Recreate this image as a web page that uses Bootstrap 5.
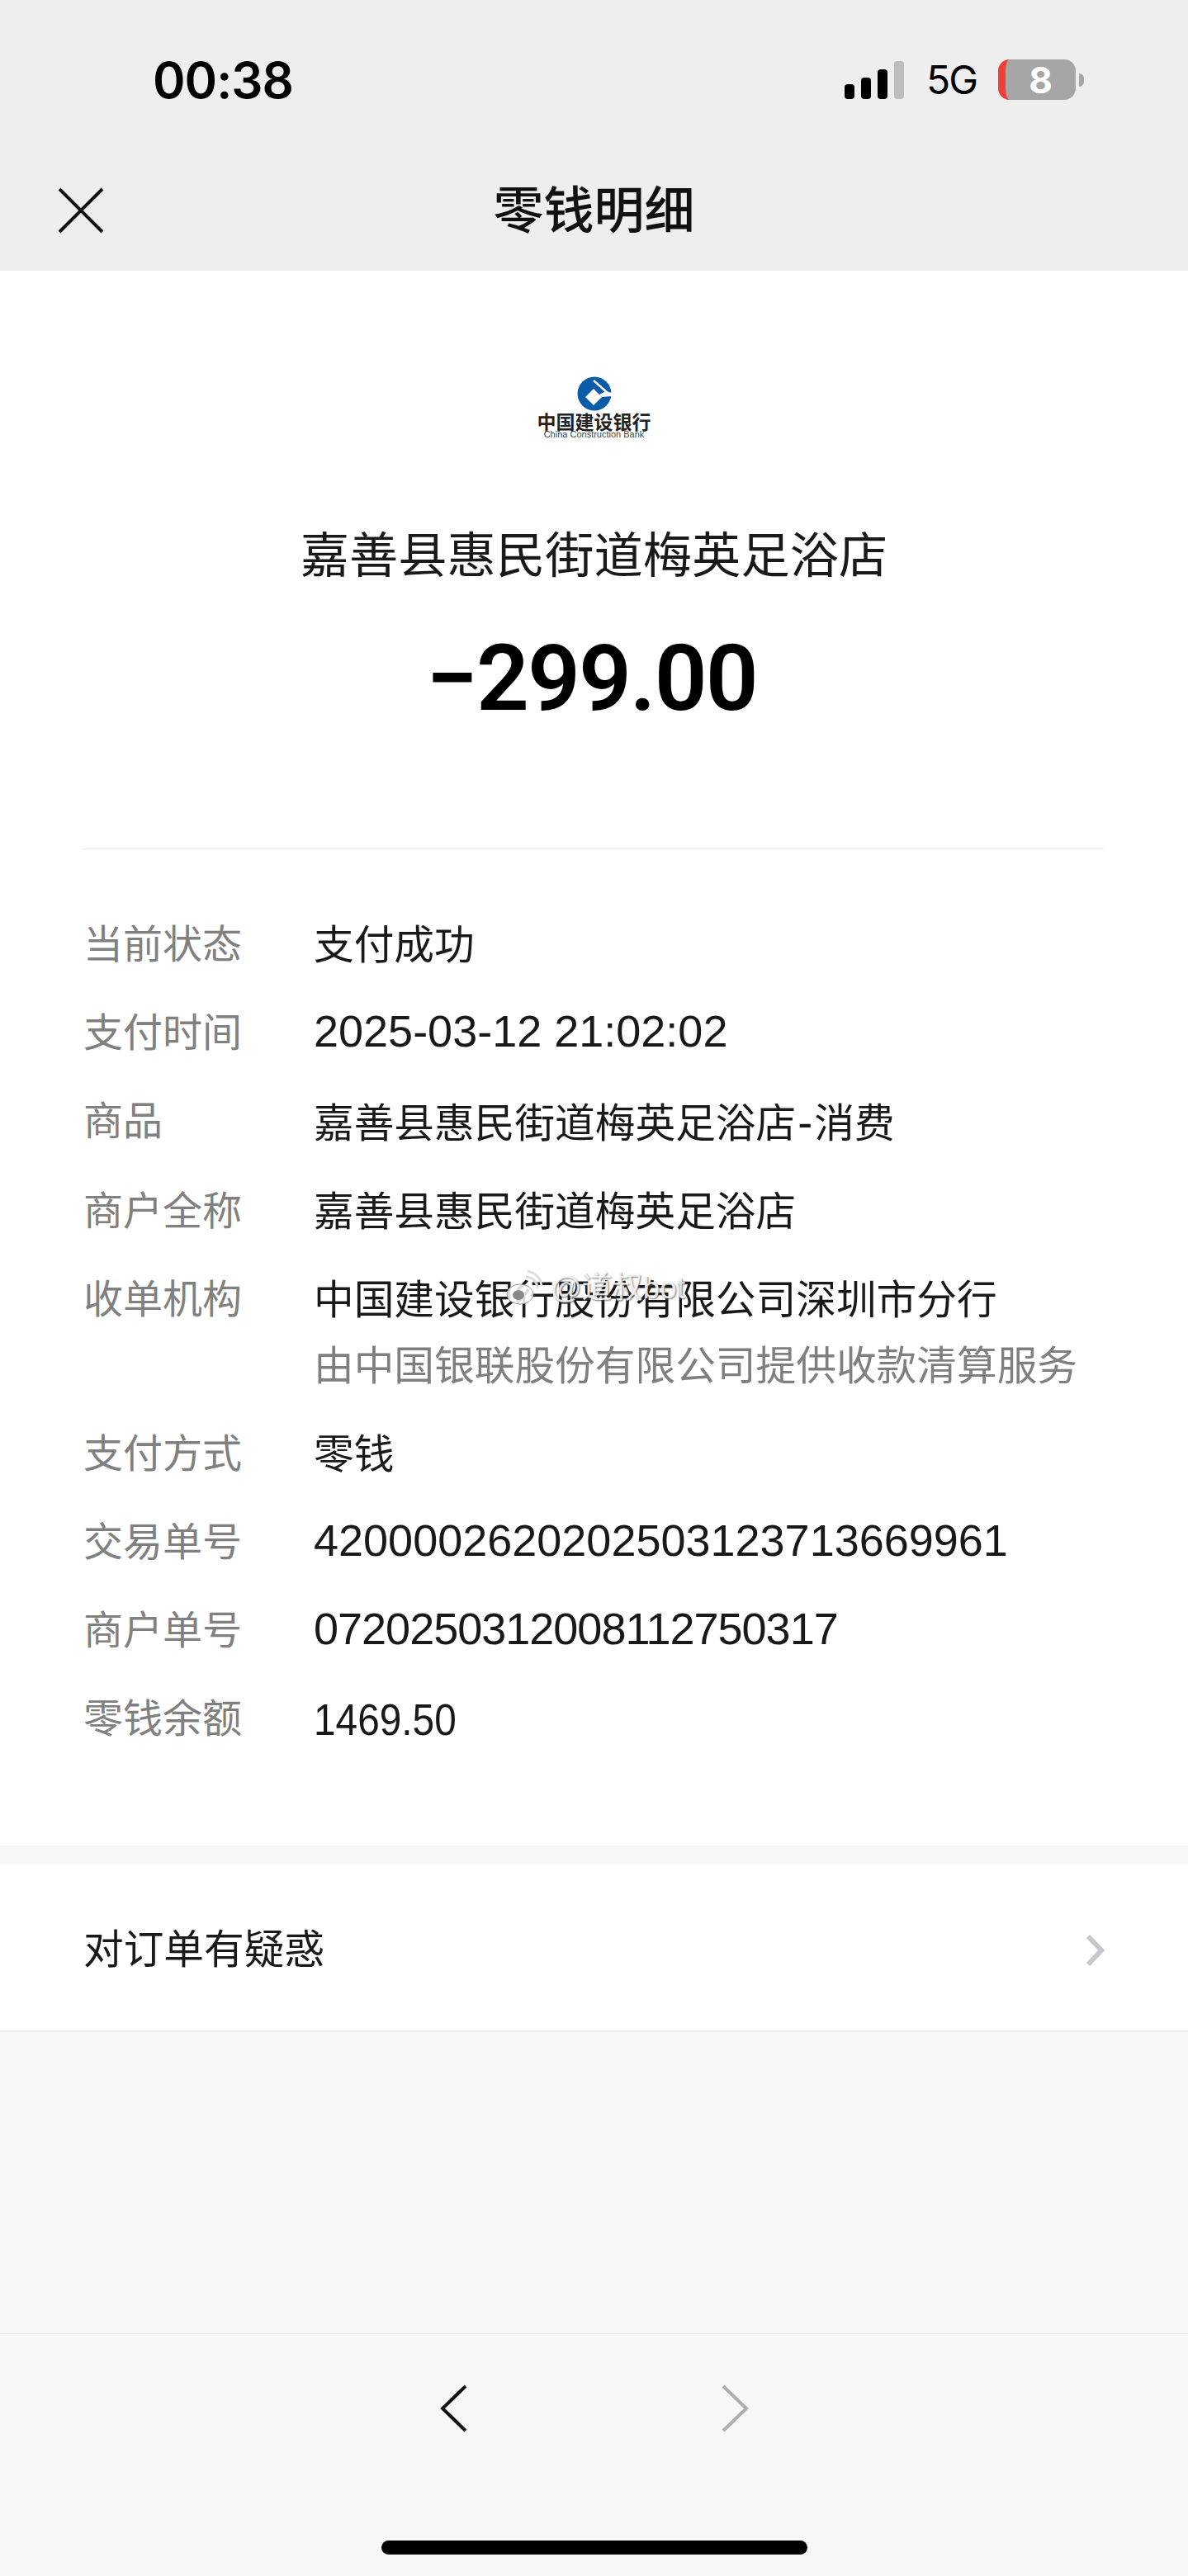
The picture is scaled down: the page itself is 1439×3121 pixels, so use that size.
<!DOCTYPE html>
<html lang="zh">
<head>
  <meta charset="UTF-8" />
  <meta name="viewport" content="width=device-width, initial-scale=1.0"/>
  <link href="https://cdn.jsdelivr.net/npm/bootstrap@5.3.1/dist/css/bootstrap.min.css" rel="stylesheet"/>
  <title>零钱明细</title>
  <style>
    body {
      background-color: #f7f7f7;
      font-family: "Liberation Sans", "Noto Sans CJK SC", sans-serif;
      color: #191919;
    }
    .page-wrap { width: 1439px; height: 3121px; overflow: hidden; }

    /* top grey part */
    .top-bar { background-color: #eeeeee; height: 328px; }
    .status-row { height: 196px; padding: 66px 126px 0 185px; }
    .time-text { font-family: Inter, sans-serif; font-weight: 600; font-size: 60px; line-height: 62px; color: #000; letter-spacing: -1px; }
    .status-right { margin-top: 6px; }
    .fiveg { font-family: Inter, sans-serif; font-size: 48px; line-height: 1; color: #000; margin: 0 26px 0 27px; letter-spacing: -2px; }
    .batt { width: 94px; height: 49px; background-color: #a6a6a6; border-radius: 14px; border-left: 9px solid #ee4036; color: #fff; font-family: Inter, sans-serif; font-weight: 700; font-size: 44px; }
    .batt-tip { width: 6px; height: 16px; background-color: #a6a6a6; border-radius: 0 6px 6px 0; margin-left: 4px; }
    .title-row { height: 132px; padding: 0 70px 12px; }
    .title-text { font-size: 61px; line-height: 1; font-weight: 500; color: #111; }
    .title-side { width: 56px; }
    .close-icon { margin-bottom: 2px; }

    /* white receipt */
    .receipt { background-color: #fff; height: 1908px; padding-top: 128px; }
    .ccb-logo { height: 104px; }
    .ccb-cn { font-size: 23px; line-height: 18px; font-weight: 700; color: #222; margin-top: 5px; }
    .ccb-en { font-family: "Liberation Sans", sans-serif; font-size: 11px; line-height: 11px; color: #444; }
    .shop-name { font-size: 59.3px; line-height: 80px; margin-top: 74px; color: #191919; }
    .amount { font-family: Roboto, sans-serif; font-weight: 600; font-size: 112px; line-height: 120px; letter-spacing: -2px; color: #000; margin-top: 48px; padding-right: 6px; }
    .divide-line { border-top: 1px solid #ececec; margin: 146px 101px 0 100px; }
    .info-list { position: relative; padding: 76px 0 0 101px; }
    .info-row { display: flex; margin-bottom: 27px; font-size: 48.7px; line-height: 80px; }
    .info-label { width: 279px; font-size: 48px; color: #808080; flex-shrink: 0; }
    .info-sub { color: #7f7f7f; }
    .info-num { font-size: 54px; margin-top: -3px; }
    .num-tight { letter-spacing: -1px; }
    .num-narrow { margin-top: 0; transform: scaleX(0.885); transform-origin: left center; }
    .dash-text { font-size: 54px; margin: 0 2px; }

    /* weibo mark lying over the text */
    .water-mark { position: absolute; left: 613px; top: 510px; gap: 10px; color: rgba(255, 255, 255, 0.85); font-size: 37px; line-height: 44px; text-shadow: 1px 1px 2px rgba(70, 70, 70, 0.75); }

    .gap-strip { height: 22px; background-color: #f7f7f7; }
    .question-row { background-color: #fff; height: 204px; padding: 8px 101px 0; border-bottom: 2px solid #ececec; font-size: 48.7px; }
    .nav-part { height: 365px; }
    .toolbar { border-top: 1px solid #e8e8e8; height: 294px; }
    .toolbar-btns { height: 180px; gap: 306px; }
    .home-bar { width: 516px; height: 17px; background-color: #000; border-radius: 9px; margin-top: 70px; }
  </style>
</head>
<body class="m-0">
  <div class="page-wrap d-flex flex-column">
    <div class="top-bar flex-shrink-0">
      <div class="status-row d-flex justify-content-between align-items-start">
        <span class="time-text">00:38</span>
        <div class="status-right d-flex align-items-center">
          <svg width="72" height="46" viewBox="0 0 72 46">
            <rect x="0" y="28" width="12" height="18" rx="4" fill="#000"/>
            <rect x="20" y="20" width="12" height="26" rx="4" fill="#000"/>
            <rect x="40" y="10" width="12" height="36" rx="4" fill="#000"/>
            <rect x="60" y="0" width="12" height="46" rx="4" fill="#bdbdbd"/>
          </svg>
          <span class="fiveg">5G</span>
          <div class="batt d-flex align-items-center justify-content-center">8</div>
          <div class="batt-tip"></div>
        </div>
      </div>
      <div class="title-row d-flex justify-content-between align-items-center">
        <svg class="title-side close-icon" width="56" height="56" viewBox="0 0 56 56">
          <path d="M2 2 L54 54 M54 2 L2 54" stroke="#111" stroke-width="4" fill="none"/>
        </svg>
        <span class="title-text">零钱明细</span>
        <span class="title-side"></span>
      </div>
    </div>

    <div class="receipt flex-shrink-0">
      <div class="ccb-logo d-flex flex-column align-items-center">
        <svg width="42" height="42" viewBox="0 0 42 42">
          <circle cx="21" cy="21" r="20.5" fill="#0b5ca8"/>
          <path d="M20 15 L30 25 L20 35 L10 25 Z" fill="#fff"/>
          <path d="M20 5 L37 20" stroke="#fff" stroke-width="2.5" fill="none"/>
          <path d="M27 22 L35 18 L42 20 L42 24 L30 25 Z" fill="#fff"/>
        </svg>
        <div class="ccb-cn">中国建设银行</div>
        <div class="ccb-en">China Construction Bank</div>
      </div>
      <div class="shop-name text-center">嘉善县惠民街道梅英足浴店</div>
      <div class="amount text-center">−299.00</div>
      <div class="divide-line"></div>
      <div class="info-list">
        <div class="info-row"><div class="info-label">当前状态</div><div>支付成功</div></div>
        <div class="info-row"><div class="info-label">支付时间</div><div class="info-num">2025-03-12 21:02:02</div></div>
        <div class="info-row"><div class="info-label">商品</div><div>嘉善县惠民街道梅英足浴店<span class="dash-text">-</span>消费</div></div>
        <div class="info-row"><div class="info-label">商户全称</div><div>嘉善县惠民街道梅英足浴店</div></div>
        <div class="info-row"><div class="info-label">收单机构</div><div>中国建设银行股份有限公司深圳市分行<br/><span class="info-sub">由中国银联股份有限公司提供收款清算服务</span></div></div>
        <div class="info-row"><div class="info-label">支付方式</div><div>零钱</div></div>
        <div class="info-row"><div class="info-label">交易单号</div><div class="info-num">4200002620202503123713669961</div></div>
        <div class="info-row"><div class="info-label">商户单号</div><div class="info-num num-tight">0720250312008112750317</div></div>
        <div class="info-row"><div class="info-label">零钱余额</div><div class="info-num num-narrow">1469.50</div></div>
        <div class="water-mark d-flex align-items-center">
          <svg width="44" height="44" viewBox="0 0 44 44">
            <ellipse cx="17" cy="29" rx="16" ry="12" fill="#fff" fill-opacity="0.85" stroke="#999" stroke-width="1"/>
            <ellipse cx="15" cy="30" rx="7" ry="6" fill="#888"/>
            <path d="M24 8 A14 14 0 0 1 38 22 M26 1 A20 20 0 0 1 43 18" stroke="#ddd" stroke-width="3" fill="none"/>
          </svg>
          <span>@道叔bot</span>
        </div>
      </div>
    </div>

    <div class="gap-strip flex-shrink-0"></div>
    <div class="question-row d-flex justify-content-between align-items-center flex-shrink-0">
      <span>对订单有疑惑</span>
      <svg width="24" height="38" viewBox="0 0 24 38"><path d="M4 2 L20 19 L4 36" stroke="#c8c8cc" stroke-width="6" fill="none"/></svg>
    </div>
    <div class="nav-part flex-shrink-0"></div>
    <div class="toolbar d-flex flex-column align-items-center flex-shrink-0">
      <div class="toolbar-btns d-flex align-items-center justify-content-center">
        <svg width="34" height="58" viewBox="0 0 34 58"><path d="M31 2 L3 29 L31 56" stroke="#111" stroke-width="4" fill="none"/></svg>
        <svg width="34" height="58" viewBox="0 0 34 58"><path d="M3 2 L31 29 L3 56" stroke="#aeaeae" stroke-width="4" fill="none"/></svg>
      </div>
      <div class="home-bar"></div>
    </div>
  </div>
  <script src="https://cdn.jsdelivr.net/npm/bootstrap@5.3.1/dist/js/bootstrap.bundle.min.js"></script>
</body>
</html>
